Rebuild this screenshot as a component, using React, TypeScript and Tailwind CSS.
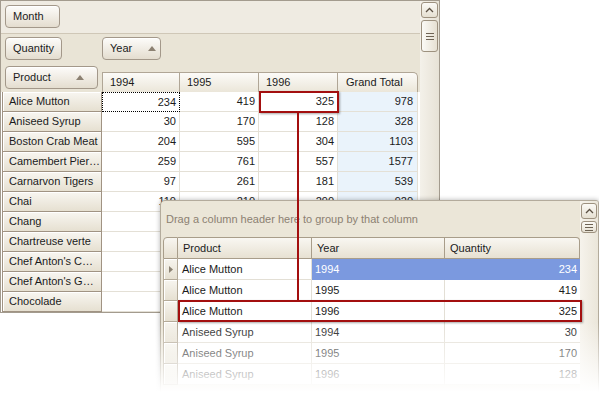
import React from "react";

const btn =
	"flex items-center rounded-[4px] border border-[#a3988a] bg-linear-to-b from-[#fdfcfa] to-[#e4ddcf] shadow-[inset_0_1px_0_#ffffff] pl-[7px] text-[#1b1b1b]";

function SortUp() {
	return (
		<svg width="8" height="5" viewBox="0 0 8 5">
			<polygon points="0,5 4,0 8,5" fill="#8c8172" />
		</svg>
	);
}

function ChevronUp() {
	return (
		<svg width="9" height="6" viewBox="0 0 9 6">
			<polyline points="1,5 4.5,1.5 8,5" fill="none" stroke="#5b5043" strokeWidth="1.3" />
		</svg>
	);
}

function Lines() {
	return (
		<svg width="8" height="7" viewBox="0 0 8 7">
			<rect x="0" y="0" width="8" height="1" fill="#6e6354" />
			<rect x="0" y="3" width="8" height="1" fill="#6e6354" />
			<rect x="0" y="6" width="8" height="1" fill="#6e6354" />
		</svg>
	);
}

const pivotRows = [
	["Alice Mutton", "234", "419", "325", "978"],
	["Aniseed Syrup", "30", "170", "128", "328"],
	["Boston Crab Meat", "204", "595", "304", "1103"],
	["Camembert Pier…", "259", "761", "557", "1577"],
	["Carnarvon Tigers", "97", "261", "181", "539"],
	["Chai", "110", "210", "290", "920"],
	["Chang", "", "", "", ""],
	["Chartreuse verte", "", "", "", ""],
	["Chef Anton's C…", "", "", "", ""],
	["Chef Anton's G…", "", "", "", ""],
	["Chocolade", "", "", "", ""],
];

const gridRows = [
	["Alice Mutton", "1994", "234"],
	["Alice Mutton", "1995", "419"],
	["Alice Mutton", "1996", "325"],
	["Aniseed Syrup", "1994", "30"],
	["Aniseed Syrup", "1995", "170"],
	["Aniseed Syrup", "1996", "128"],
];

const colW = ["w-[78px]", "w-[79px]", "w-[79px]", "w-[80px]"];
const headCell =
	"flex items-center h-[20px] pl-[7px] border-t border-r border-[#b0a696] bg-linear-to-b from-[#fcfbf8] to-[#ebe6d9] text-[#1b1b1b]";

export default function App() {
	return (
		<div className="relative w-[599px] h-[395px] overflow-hidden bg-white font-['Liberation_Sans',Arial,sans-serif] text-[11px] leading-none">
			{/* pivot grid */}
			<div className="flex w-[440px] h-[313px] border border-[#a39b8e] bg-white overflow-hidden">
				<div className="flex flex-col w-[419px]">
					<div className="h-[33px] bg-[#efebe2] border-b border-[#cfc7b7] pl-[4px] pt-[4px]">
						<div className={`${btn} w-[55px] h-[23px]`}>Month</div>
					</div>
					<div className="h-[58px] bg-[#e9e4d6] flex flex-col">
						<div className="flex h-[23px] mt-[3px]">
							<div className={`${btn} ml-[4px] w-[57px]`}>Quantity</div>
							<div className={`${btn} ml-[40px] w-[59px] gap-[16px]`}>
								Year
								<SortUp />
							</div>
						</div>
						<div className="flex h-[26px] mt-[6px]">
							<div className={`${btn} ml-[4px] w-[93px] h-[23px] justify-between pr-[13px]`}>
								Product
								<SortUp />
							</div>
							<div className="flex self-end ml-[4px]">
								{["1994", "1995", "1996", "Grand Total"].map((h, i) => (
									<div
										key={h}
										className={`${headCell} ${colW[i]} ${i === 0 ? "border-l" : ""} ${
											i === 3 ? "rounded-tr-[5px] pl-[8px]" : ""
										}`}
									>
										{h}
									</div>
								))}
							</div>
						</div>
					</div>
					<div className="flex-1 bg-white">
						{pivotRows.map((r, ri) => (
							<div key={ri} className="flex h-[20px]">
								<div className="flex items-center ml-[1px] w-[100px] pl-[6px] border-l border-r border-b border-[#a09383] bg-linear-to-b from-[#f8f6f1] to-[#e6e0d1] shadow-[inset_1px_1px_0_#ffffff] text-[#1b1b1b] whitespace-nowrap overflow-hidden">
									{r[0]}
								</div>
								{r.slice(1).map((v, ci) => (
									<div
										key={ci}
										className={`flex items-center justify-end pr-[3px] ${colW[ci]} border-r border-b border-[#e4e0d6] text-[#1b1b1b] ${
											ci === 3 ? "bg-[#eaf3fb] pr-[4px]" : ""
										} ${ri === 0 && ci === 0 ? "border border-dotted border-black" : ""}`}
									>
										{v}
									</div>
								))}
							</div>
						))}
					</div>
				</div>
				<div className="w-[19px] flex flex-col bg-linear-to-r from-[#f4f1ea] to-[#e7e2d6]">
					<div className="ml-[1px] mt-[1px] w-[17px] h-[16px] flex items-center justify-center rounded-[3px] border border-[#9d917f] bg-linear-to-b from-[#fbfaf6] to-[#e6e0d2]">
						<ChevronUp />
					</div>
					<div className="ml-[1px] mt-[2px] w-[17px] h-[32px] flex items-center justify-center rounded-[3px] border border-[#9d917f] bg-linear-to-r from-[#fbfaf6] to-[#e6e0d2]">
						<Lines />
					</div>
				</div>
			</div>

			{/* grid window on top */}
			<div className="absolute left-[160px] top-[200px] flex w-[439px] h-[195px] border border-[#b3ab9c] rounded-tl-[5px] rounded-tr-[3px] bg-[#ebe6d8] overflow-hidden shadow-[0_0_5px_rgba(0,0,0,0.3)]">
				<div className="flex flex-col w-[419px]">
					<div className="flex items-center h-[36px] pl-[5px] text-[#8c8172]">
						Drag a column header here to group by that column
					</div>
					<div className="pl-[2px]">
						<div className="flex h-[22px] text-[#1b1b1b]">
							<div className="w-[15px] rounded-tl-[4px] border-t border-l border-r border-b border-[#a89d8a] bg-linear-to-b from-[#f8f6f1] to-[#e6dfcf]" />
							{[
								["Product", "w-[134px]"],
								["Year", "w-[133px]"],
								["Quantity", "w-[135px] rounded-tr-[4px]"],
							].map(([t, w]) => (
								<div
									key={t}
									className={`flex items-center pl-[5px] ${w} border-t border-r border-b border-[#a89d8a] bg-linear-to-b from-[#f9f7f2] to-[#e7e1d2]`}
								>
									{t}
								</div>
							))}
						</div>
						{gridRows.map((r, ri) => (
							<div key={ri} className="flex h-[21px] bg-white text-[#1b1b1b]">
								<div className="flex items-center justify-center w-[15px] border-l border-r border-b border-[#b4aa98] bg-linear-to-b from-[#f7f5ef] to-[#e6e0d1] shadow-[inset_1px_1px_0_#ffffff]">
									{ri === 0 && (
										<svg width="4" height="7" viewBox="0 0 4 7">
											<polygon points="0,0 4,3.5 0,7" fill="#8c8374" />
										</svg>
									)}
								</div>
								<div className="flex items-center pl-[4px] w-[134px] border-r border-b border-[#e3dfd5]">{r[0]}</div>
								<div
									className={`flex items-center pl-[3px] w-[133px] border-r border-b ${
										ri === 0 ? "bg-[#7b99df] text-white border-[#7b99df]" : "border-[#e3dfd5]"
									}`}
								>
									{r[1]}
								</div>
								<div
									className={`flex items-center justify-end pr-[3px] w-[135px] border-b ${
										ri === 0 ? "bg-[#7b99df] text-white border-[#7b99df]" : "border-[#e3dfd5]"
									}`}
								>
									{r[2]}
								</div>
							</div>
						))}
					</div>
				</div>
				<div className="w-[18px] flex flex-col bg-linear-to-r from-[#f6f3ec] to-[#ebe6da]">
					<div className="ml-[1px] mt-[2px] w-[16px] h-[16px] flex items-center justify-center rounded-[3px] border border-[#9d917f] bg-linear-to-b from-[#fbfaf6] to-[#e6e0d2]">
						<ChevronUp />
					</div>
					<div className="ml-[1px] mt-[2px] w-[16px] h-[12px] flex items-center justify-center rounded-[3px] border border-[#9d917f] bg-linear-to-b from-[#fbfaf6] to-[#e6e0d2]">
						<Lines />
					</div>
				</div>
			</div>

			{/* callouts */}
			<div className="absolute left-[259px] top-[91px] w-[80px] h-[22px] border-2 border-[#a30f0f] shadow-[1px_1px_2px_rgba(0,0,0,0.35)]" />
			<div className="absolute left-[297px] top-[112px] w-[2px] h-[189px] bg-[#a30f0f]" />
			<div className="absolute left-[178px] top-[300px] w-[404px] h-[22px] border-2 border-[#a30f0f] shadow-[1px_1px_2px_rgba(0,0,0,0.35)]" />

			{/* bottom fade */}
			<div className="absolute left-0 right-0 top-[322px] h-[70px] bg-linear-to-b from-white/0 to-white" />
			<div className="absolute left-0 right-0 top-[392px] bottom-0 bg-white" />
		</div>
	);
}
